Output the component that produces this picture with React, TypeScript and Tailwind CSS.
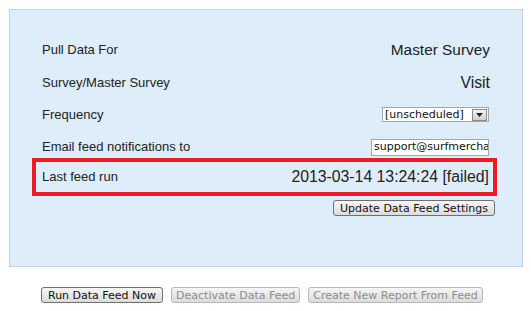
const label = "text-[13px] text-[#222] font-['Liberation_Sans',Arial,sans-serif]";
const value = "text-[15.8px] text-[#222] font-['Liberation_Sans',Arial,sans-serif]";
const ui = "font-['DejaVu_Sans',Verdana,sans-serif] text-[11px]";

const Button = ({ children, disabled, pad = 'px-[6px]' }: { children: string; disabled?: boolean; pad?: string }) => (
  <button
    disabled={disabled}
    className={`${ui} ${pad} h-[16px] leading-none rounded-[3px] border whitespace-nowrap bg-gradient-to-b from-[#f6f6f6] to-[#dcdcdc] ${
      disabled ? 'border-[#b7b7b7] text-[#8d8d8d]' : 'border-[#6f6f6f] text-[#111]'
    }`}
  >
    {children}
  </button>
);

export default function App() {
  return (
    <div className="w-[531px] h-[311px] bg-white">
      <div className="ml-[9px] mt-[9px] w-[514px] h-[258px] border border-[#bcd4ea] bg-[#deedfa] pt-[24px]">
        <div className="h-[32px] mx-[32px] flex items-center justify-between">
          <span className={label}>Pull Data For</span>
          <span className="text-[15.4px] text-[#222] font-['Liberation_Sans',Arial,sans-serif]">Master Survey</span>
        </div>
        <div className="h-[34px] mx-[32px] flex items-center justify-between">
          <span className={label}>Survey/Master Survey</span>
          <span className={value}>Visit</span>
        </div>
        <div className="h-[28px] pt-[1px] mx-[32px] flex items-center justify-between">
          <span className={label}>Frequency</span>
          <div className={`${ui} h-[15px] w-[107px] mr-[1px] border border-[#a5a5a5] bg-white flex items-center justify-between pl-[2px] text-[#111]`}>
            <span className="leading-none">[unscheduled]</span>
            <span className="h-[12px] w-[15px] mr-[1px] border border-[#8a8a8a] bg-gradient-to-b from-[#f4f4f4] to-[#cfcfcf] flex items-center justify-center">
              <svg width="7" height="4" viewBox="0 0 7 4">
                <path d="M0 0h7L3.5 4z" fill="#222" />
              </svg>
            </span>
          </div>
        </div>
        <div className="h-[30px] pt-[8px] mx-[32px] flex items-center justify-between">
          <span className={label}>Email feed notifications to</span>
          <div className={`${ui} h-[17px] w-[118px] mr-[1px] border border-[#a5a5a5] bg-white flex items-center pl-[2px] overflow-hidden whitespace-nowrap text-[#111]`}>
            support@surfmercha
          </div>
        </div>
        <div className="h-[38px] ml-[22px] mr-[25px] border-4 border-[#ed1c24] flex items-center justify-between pl-[6px] pr-[4px]">
          <span className={label}>Last feed run</span>
          <span className={value}>2013-03-14 13:24:24 [failed]</span>
        </div>
        <div className="mt-[4px] mr-[27px] flex justify-end">
          <Button>Update Data Feed Settings</Button>
        </div>
      </div>
      <div className="mt-[20px] pl-[41px] flex gap-[8px]">
        <Button>Run Data Feed Now</Button>
        <Button disabled pad="px-[4px]">Deactivate Data Feed</Button>
        <Button disabled pad="px-[4px]">Create New Report From Feed</Button>
      </div>
    </div>
  );
}
